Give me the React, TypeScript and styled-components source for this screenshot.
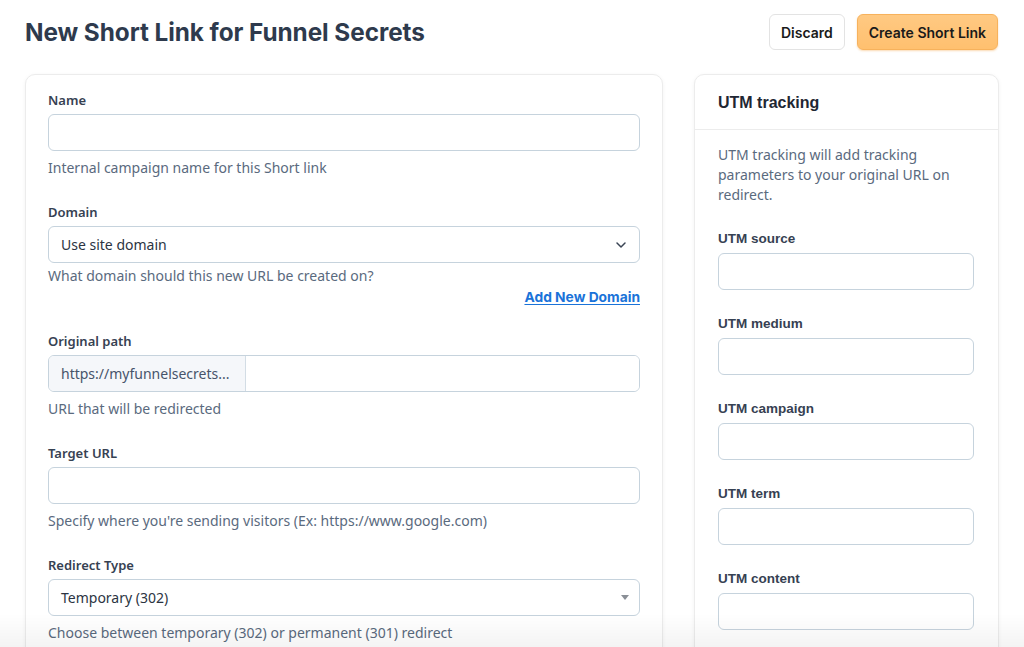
import React from "react";
import styled, { createGlobalStyle } from "styled-components";

const Global = createGlobalStyle`
  html, body { margin: 0; padding: 0; background: #ffffff; }
  body { font-family: "Noto Sans", "Open Sans", sans-serif; color: #2d3748; }
  * { box-sizing: border-box; }
`;

const Page = styled.div`
  padding: 14px 25px 40px 25px;
`;

const TopBar = styled.header`
  display: flex;
  align-items: center;
  justify-content: space-between;
  height: 36px;
  margin-bottom: 24px;
`;

const Title = styled.h1`
  margin: 0;
  font-family: Inter, sans-serif;
  font-weight: 700;
  font-size: 24.3px;
  letter-spacing: -0.05px;
  color: #2e3a4d;
`;

const Actions = styled.div`
  display: flex;
  gap: 12px;
  margin-right: 1px;
`;

const Button = styled.button<{ $primary?: boolean }>`
  height: 36px;
  padding: 0 11px;
  border-radius: 6px;
  font-family: Inter, sans-serif;
  font-weight: 600;
  font-size: 14px;
  color: #1a1a1a;
  cursor: pointer;
  border: 1px solid ${(p) => (p.$primary ? "#f7b25c" : "#e3e3e3")};
  background: ${(p) =>
    p.$primary ? "linear-gradient(#ffc982, #ffc06f)" : "#ffffff"};
  box-shadow: ${(p) => (p.$primary ? "0 1px 2px rgba(240,150,40,0.35)" : "none")};
`;

const Columns = styled.div`
  display: grid;
  grid-template-columns: 638px 305px;
  gap: 31px;
  align-items: start;
`;

const Card = styled.section`
  background: #fff;
  border: 1px solid #ececec;
  border-radius: 10px;
  box-shadow: 0 1px 4px rgba(0, 0, 0, 0.05);
`;

const MainBody = styled.div`
  padding: 15px 22px 30px 22px;
  display: flex;
  flex-direction: column;
  gap: 24px;
`;

const Field = styled.div`
  display: flex;
  flex-direction: column;
`;

const Label = styled.label<{ $alt?: boolean }>`
  display: block;
  font-family: ${(p) => (p.$alt ? '"Liberation Sans", Arial, sans-serif' : '"Noto Sans", sans-serif')};
  font-weight: ${(p) => (p.$alt ? 700 : 600)};
  font-size: ${(p) => (p.$alt ? "13.5px" : "13px")};
  line-height: 20px;
  color: #364152;
  margin-bottom: 4px;
`;

const Input = styled.input`
  height: 37px;
  width: 100%;
  border: 1px solid #c6d3dd;
  border-radius: 6px;
  background: #fff;
  padding: 0 12px;
  font: inherit;
  outline: none;
`;

const SelectBox = styled.div`
  height: 37px;
  border: 1px solid #c6d3dd;
  border-radius: 6px;
  background: #fff;
  padding: 0 12px;
  display: flex;
  align-items: center;
  justify-content: space-between;
  font-size: 14px;
  color: #2b3442;
`;

const Caret = styled.span`
  width: 0;
  height: 0;
  border-left: 4px solid transparent;
  border-right: 4px solid transparent;
  border-top: 5px solid #8a8f96;
  margin-right: -2px;
`;

const Help = styled.p<{ $tight?: boolean }>`
  margin: ${(p) => (p.$tight ? "3px" : "7px")} 0 0 0;
  font-size: 14px;
  line-height: 20px;
  color: #5a6a7e;
`;

const LinkRow = styled.div`
  display: flex;
  justify-content: flex-end;
  margin-top: 1px;
  line-height: 20px;
`;

const Link = styled.a`
  font-family: Inter, sans-serif;
  font-weight: 700;
  font-size: 13.8px;
  color: #1a73d9;
  text-decoration: underline;
  text-underline-offset: 2px;
`;

const Group = styled.div`
  display: flex;
  height: 37px;
  border: 1px solid #c6d3dd;
  border-radius: 6px;
  overflow: hidden;
`;

const Prefix = styled.div`
  width: 197px;
  flex: none;
  background: #f5f7fa;
  border-right: 1px solid #d3dde5;
  display: flex;
  align-items: center;
  padding: 0 12px;
  font-size: 14px;
  color: #47546a;
  white-space: nowrap;
`;

const GroupInput = styled.input`
  flex: 1;
  border: none;
  outline: none;
  padding: 0 12px;
  font: inherit;
`;

const SideHeader = styled.div`
  padding: 16px 23px 14px 23px;
  border-bottom: 1px solid #ececec;
  font-family: "Liberation Sans", Arial, sans-serif;
  font-weight: 700;
  font-size: 16px;
  line-height: 24px;
  color: #1f2733;
`;

const SideBody = styled.div`
  padding: 15px 24px 30px 23px;
  display: flex;
  flex-direction: column;
  gap: 24px;
`;

const SideText = styled.p`
  margin: 0;
  font-size: 14px;
  line-height: 20px;
  color: #5a6a7e;
`;

const BottomFade = styled.div`
  position: fixed;
  left: 0;
  right: 0;
  bottom: 0;
  height: 34px;
  pointer-events: none;
  background: linear-gradient(rgba(0, 0, 0, 0), rgba(0, 0, 0, 0.045));
`;

const Chevron = () => (
  <svg width="12" height="8" viewBox="0 0 12 8" fill="none">
    <path d="M2 2L6 6L10 2" stroke="#3a4454" strokeWidth="1.5" strokeLinecap="round" strokeLinejoin="round" />
  </svg>
);

const utmFields = ["UTM source", "UTM medium", "UTM campaign", "UTM term", "UTM content"];

export default function App() {
  return (
    <>
      <Global />
      <Page>
        <TopBar>
          <Title>New Short Link for Funnel Secrets</Title>
          <Actions>
            <Button>Discard</Button>
            <Button $primary>Create Short Link</Button>
          </Actions>
        </TopBar>
        <Columns>
          <Card>
            <MainBody>
              <Field>
                <Label>Name</Label>
                <Input />
                <Help>Internal campaign name for this Short link</Help>
              </Field>
              <Field>
                <Label>Domain</Label>
                <SelectBox>
                  <span>Use site domain</span>
                  <Chevron />
                </SelectBox>
                <Help $tight>What domain should this new URL be created on?</Help>
                <LinkRow>
                  <Link href="#">Add New Domain</Link>
                </LinkRow>
              </Field>
              <Field>
                <Label>Original path</Label>
                <Group>
                  <Prefix>https://myfunnelsecrets...</Prefix>
                  <GroupInput />
                </Group>
                <Help>URL that will be redirected</Help>
              </Field>
              <Field>
                <Label>Target URL</Label>
                <Input />
                <Help>Specify where you're sending visitors (Ex: https://www.google.com)</Help>
              </Field>
              <Field>
                <Label>Redirect Type</Label>
                <SelectBox>
                  <span>Temporary (302)</span>
                  <Caret />
                </SelectBox>
                <Help>Choose between temporary (302) or permanent (301) redirect</Help>
              </Field>
            </MainBody>
          </Card>
          <Card>
            <SideHeader>UTM tracking</SideHeader>
            <SideBody>
              <SideText>UTM tracking will add tracking parameters to your original URL on redirect.</SideText>
              {utmFields.map((f) => (
                <Field key={f}>
                  <Label $alt>{f}</Label>
                  <Input />
                </Field>
              ))}
            </SideBody>
          </Card>
        </Columns>
      </Page>
      <BottomFade />
    </>
  );
}
